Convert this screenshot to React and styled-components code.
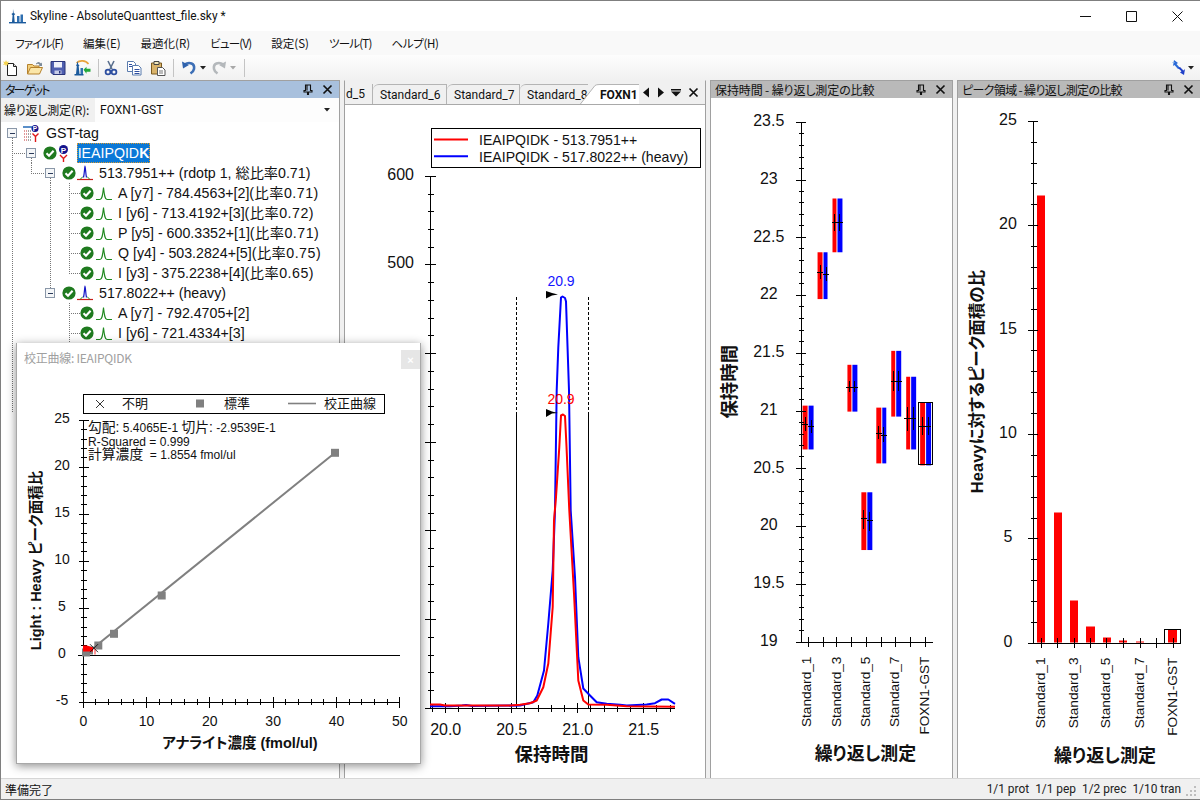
import React from "react";
import styled, { createGlobalStyle } from "styled-components";

const SANS = `"Liberation Sans", "Noto Sans CJK JP", sans-serif`;
const UI = `"Noto Sans CJK JP", "Liberation Sans", sans-serif`;
const TAB = `Roboto, "Liberation Sans", sans-serif`;

const Global = createGlobalStyle`
  html, body { margin: 0; padding: 0; background: #fff; overflow: hidden; }
  * { box-sizing: border-box; }
`;

const Window = styled.div`
  position: relative; width: 1200px; height: 800px; display: flex; flex-direction: column;
  border-top: 1px solid #7f7f7f; border-left: 1px solid #7f7f7f; border-bottom: 1px solid #7f7f7f;
  background: #f0f0f0; font-family: ${SANS}; overflow: hidden; color: #000;
  font-feature-settings: "palt";
`;
const TitleBar = styled.div`
  height: 30px; flex: none; background: #fff; display: flex; align-items: center; padding-left: 8px;
`;
const TitleText = styled.div`
  margin-left: 4px; font: 11.9px ${TAB}; color: #111; flex: 1;
`;
const WinButton = styled.div`
  width: 46px; height: 30px; display: flex; align-items: center; justify-content: center;
`;
const MenuBar = styled.div`
  height: 24px; flex: none; background: #f9f9f9; display: flex; align-items: center; gap: 20px; padding-left: 14px;
`;
const MenuItem = styled.span`
  font: 11.5px/24px ${UI}; font-feature-settings: "palt"; color: #111; white-space: nowrap;
  letter-spacing: ${p => p.$tight || 0}px;
`;
const ToolBar = styled.div`
  height: 25px; flex: none; display: flex; align-items: center; gap: 7.5px; padding: 0 6px 0 2px;
  background: linear-gradient(#fdfdfd, #f1f1f1);
`;
const ToolIcon = styled.svg`
  width: 16px; height: 16px; flex: none; display: block; margin-left: ${p => p.$shift || 0}px;
`;
const Caret = styled.svg`
  width: 6px; height: 4px; flex: none; display: block; margin-left: ${p => p.$shift || 0}px;
`;
const ToolSep = styled.div`
  width: 1px; height: 18px; flex: none; background: #c4c4c4; margin-right: -4px;
`;
const ToolSpacer = styled.div`flex: 1;`;

const Workspace = styled.div`
  flex: 1; min-height: 0; display: flex; gap: 4px; background: #f0f0f0;
`;
const Pane = styled.section`
  width: ${p => p.$w}px; flex: none; display: flex; flex-direction: column; background: #fff;
  border-top: 1px solid ${p => (p.$tabs ? "#f0f0f0" : "#a0a0a0")};
  border-left: ${p => (p.$noLeft ? "0" : "1px solid #a0a0a0")};
  border-right: ${p => (p.$noRight ? "0" : "1px solid #a0a0a0")};
`;
const PaneHeader = styled.header`
  height: 17px; flex: none; display: flex; align-items: center; gap: 9px; padding: 0 6px 0 4px;
  background: ${p => (p.$active ? "#a8c0dd" : "#b9b9b9")};
`;
const PaneTitle = styled.div`
  flex: 1; font: 12px/17px ${UI}; font-feature-settings: "palt"; color: #111; white-space: nowrap; overflow: hidden;
  letter-spacing: ${p => p.$tight || 0}px;
`;
const HeadIcon = styled.svg`
  width: ${p => p.$w || 10}px; height: 11px; flex: none; display: block;
`;

const ReplicateRow = styled.div`
  height: 24px; flex: none; display: flex; align-items: center; background: #f0f0f0; padding-left: 3px;
`;
const ReplicateLabel = styled.label`
  font: 12px/24px ${UI}; font-feature-settings: "palt"; letter-spacing: -0.2px; color: #111; width: 91px; flex: none; white-space: nowrap;
`;
const Combo = styled.div`
  flex: 1; height: 24px; background: #fdfdfd; display: flex; align-items: center; justify-content: space-between;
  padding: 0 9px 0 5px; font: 12px ${TAB}; color: #111;
`;
const Tree = styled.div`
  flex: 1; min-height: 0; padding-top: 1px; background: #fff; overflow: hidden;
`;
const Row = styled.div`
  height: 20px; display: flex; align-items: center; white-space: nowrap;
`;
const Connector = styled.svg`
  height: 20px; width: ${p => p.$w}px; flex: none; display: block;
`;
const CheckIcon = styled.svg`
  width: 14px; height: 14px; flex: none; display: block;
`;
const PeakIcon = styled.svg`
  width: 16px; height: 16px; flex: none; display: block; margin-left: ${p => p.$gap}px; margin-right: 6px;
`;
const PepIcon = styled.svg`
  width: 11px; height: 17px; flex: none; display: block; margin: 0 8px 0 1px;
`;
const ProtIcon = styled.svg`
  width: 17px; height: 17px; flex: none; display: block; margin-right: 6px;
`;
const RowText = styled.span`
  font: 14.2px/20px ${SANS}; color: #111;
`;
const Ratio = styled.span`
  letter-spacing: 0.5px;
`;
const Selected = styled.span`
  font: 14.2px/20px ${SANS}; color: #fff; background: #0a78d7; outline: 1px dotted #d99a30; outline-offset: -1px;
  height: 20px; width: 73px; display: flex; align-items: center; justify-content: center; b { font-weight: 700; }
`;

const TabStrip = styled.div`
  height: 24px; flex: none; display: flex; align-items: stretch; background: #f0f0f0; border-bottom: 1px solid #a9a9a9; padding-top: 3px;
`;
const TabList = styled.div`
  width: 294px; flex: none; display: flex; overflow: hidden; padding-left: 1px;
`;
const Tab = styled.div`
  width: ${p => p.$w}px; flex: none; height: 20px; font: 12px ${TAB}; color: #111; white-space: nowrap;
  border-right: ${p => (p.$open ? "0" : "1px solid #b4b4b4")}; border-top: ${p => (p.$cut ? "0" : "1px solid #b4b4b4")};
  border-top-left-radius: ${p => (p.$cut ? 0 : 6)}px;
  padding-left: ${p => (p.$cut ? 0 : 7)}px; line-height: 21px;
`;
const ActiveTab = styled.div`
  flex: none; display: flex; height: 21px; margin-left: ${p => p.$shift}px; margin-bottom: -1px;
`;
const Slant = styled.svg`
  width: 20px; height: 21px; flex: none; display: block;
`;
const ActiveLabel = styled.div`
  background: #fff; width: 60px; font: 700 12px ${TAB}; color: #111; line-height: 21px; border-top: 1px solid #b4b4b4;
`;
const TabTools = styled.div`
  flex: 1; display: flex; align-items: center; gap: 4px; padding: 0 6px 3px 3px; justify-content: space-between;
`;
const Chart = styled.svg`
  flex: 1; min-height: 0; width: 100%; display: block; background: #fff;
`;
const T = styled.text`
  font-family: ${SANS}; font-size: ${p => p.$s}px; font-weight: ${p => p.$w || 400}; fill: ${p => p.$c || "#111"};
`;
const Cjk = styled.tspan`
  font-size: 13.8px;
`;
const StatusBar = styled.footer`
  height: 21px; flex: none; display: flex; align-items: center; background: #f0f0f0; border-top: 1px solid #d6d6d6;
  padding-left: 4px; font: 12px/19px ${UI}; font-feature-settings: "palt"; color: #111;
`;
const StatusRight = styled.div`
  margin-left: auto; display: flex; gap: 6px; font: 11.9px/20px ${TAB}; color: #222; align-items: center;
`;
const Grip = styled.svg`
  width: 12px; height: 12px; flex: none; margin: 4px 3px 0 -2px; display: block;
`;
const Dialog = styled.div`
  position: absolute; left: 15px; top: 342px; width: 405px; height: 421px; background: #fff;
  border: 1px solid #a8a8a8; border-top: 0; box-shadow: 0 2px 9px rgba(0,0,0,.45);
  display: flex; flex-direction: column;
`;
const DialogBar = styled.div`
  height: 30px; flex: none; display: flex; justify-content: space-between; align-items: flex-start; padding: 0 0 0 7px;
`;
const DialogTitle = styled.div`
  font: 12px/30px ${UI}; font-feature-settings: "palt"; letter-spacing: -0.25px; color: #a0a0a0;
`;
const DialogClose = styled.div`
  width: 19px; height: 19px; margin-top: 7px; background: #e6e6e6; color: #fff; font: 700 11px ${SANS};
  display: flex; align-items: center; justify-content: center;
`;

const Skyline = () => (
  <svg width="17" height="15" viewBox="0 0 17 15" style={{ display: "block", flex: "none" }}>
    <path d="M0 13h17v1.4H0z" fill="#1b5a9c" />
    <path d="M4 0l.7 4 1.6 1-1.2 1.2.6 6.8H3l.6-6.8L2.4 5 3.9 4z" fill="#1b5a9c" />
    <path d="M8 7h2.5v6H8zM11.5 5.5H14V13h-2.5z" fill="#2f6fb0" />
  </svg>
);

const NewIcon = () => (
  <ToolIcon viewBox="0 0 16 16">
    <path d="M4.5 3.5h6l3 3v9h-9z" fill="#fff" stroke="#222" />
    <path d="M10.5 3.5v3h3" fill="#ddd" stroke="#222" />
    <path d="M3 0l.9 2L6 1.4 4.8 3.2 6 5l-2.1-.5L3 6.4 2.2 4.5 0 5l1.3-1.8L0 1.4 2.2 2z" fill="#f4d24c" />
  </ToolIcon>
);
const OpenIcon = () => (
  <ToolIcon viewBox="0 0 16 16">
    <path d="M.5 14V4.5h5l1.5 1.5h5v2" fill="#f2cf7c" stroke="#b5812c" />
    <path d="M.5 14l3-6.5h12L12.5 14z" fill="#fbe6a8" stroke="#b5812c" />
    <path d="M9 3.5c1.5-2 3.5-2 5 0l1-1v3.4h-3.4l1-1c-1-1.3-2.3-1.3-3.6-.4z" fill="#7b8a99" />
  </ToolIcon>
);
const SaveIcon = () => (
  <ToolIcon viewBox="0 0 16 16">
    <path d="M1 1.5h14v13H3l-2-2z" fill="#4f5fb0" stroke="#2a3478" />
    <path d="M4 2h8v5.5H4z" fill="#eef0fa" />
    <path d="M4.5 10.5h7V14h-7z" fill="#c8cde8" />
    <path d="M9 11h1.5v2.5H9z" fill="#2a3478" />
  </ToolIcon>
);
const ImportIcon = () => (
  <ToolIcon viewBox="0 0 16 16" style={{ width: 17 }}>
    <path d="M2 3c3-3 9-3 12 1" fill="none" stroke="#e8a33c" strokeWidth="1.6" />
    <path d="M3 1l.8 3.5L5 5.2l-.8 1L5 14H1.5l.8-7.8-.8-1L2.2 4.5z" fill="#1b5a9c" />
    <path d="M6 8h2.5v6H6z" fill="#2f6fb0" />
    <path d="M0 14h9v1.5H0z" fill="#1b5a9c" />
    <path d="M9 9.8l3-3v2h4v3h-4v2z" fill="#21a83a" />
  </ToolIcon>
);
const CutIcon = () => (
  <ToolIcon viewBox="0 0 16 16">
    <path d="M5 1l4 8M11 1L7 9" stroke="#5a6f8e" strokeWidth="1.6" fill="none" />
    <circle cx="5" cy="12" r="2.4" fill="none" stroke="#2e4fa0" strokeWidth="1.8" />
    <circle cx="11" cy="12" r="2.4" fill="none" stroke="#2e4fa0" strokeWidth="1.8" />
  </ToolIcon>
);
const CopyIcon = () => (
  <ToolIcon viewBox="0 0 16 16">
    <path d="M1.5 1.5h6l2 2v8h-8z" fill="#fff" stroke="#5b7cae" />
    <path d="M6.5 5.5h6l2.5 2.5v7h-8.5z" fill="#fff" stroke="#5b7cae" />
    <path d="M3 4.5h3M3 6.5h3M8.5 9.5h5M8.5 11.5h5M8.5 13.5h5" stroke="#2e4fa0" />
  </ToolIcon>
);
const PasteIcon = () => (
  <ToolIcon viewBox="0 0 16 16">
    <path d="M1.5 3h10v11h-10z" fill="#d9b36a" stroke="#7a5a20" />
    <path d="M4 1.5h5v3H4z" fill="#f2e6b8" stroke="#444" />
    <path d="M7.5 7.5h5l2.5 2.5v5.5H7.5z" fill="#fff" stroke="#555" />
    <path d="M9 11h4M9 13h4" stroke="#777" />
  </ToolIcon>
);
const UndoIcon = ({ gray, shift, flip }) => (
  <ToolIcon viewBox="0 0 16 16" $shift={shift}>
    <g transform={flip ? "translate(16 0) scale(-1 1)" : undefined}>
      <path d="M3.5 4.5c5-3 10.5-1 9.5 4.5-.4 2-2 3.5-3.5 4.5" fill="none" stroke={gray ? "#b4b8bb" : "#3d6fb6"} strokeWidth="2.6" />
      <path d="M1 1.5l1 7 6-3.5z" fill={gray ? "#b4b8bb" : "#2f62ad"} />
    </g>
  </ToolIcon>
);
const CaretIcon = ({ gray, shift }) => (
  <Caret viewBox="0 0 6 4" $shift={shift}><path d="M0 0h6L3 3.5z" fill={gray ? "#a8a8a8" : "#222"} /></Caret>
);
const SyncIcon = () => (
  <ToolIcon viewBox="0 0 16 16" style={{ marginRight: -6 }}>
    <path d="M3 0l4 3-1.5 1L9 8 7 9 3.5 5 2 6z" fill="#2a6ad8" />
    <path d="M13 15l-4-2.5 1.5-1.3L7 8l2-1 3.5 3.5L14 9z" fill="#1f3fc8" />
    <path d="M1 3l1.5-1.5L4 3z" fill="#8fb8e8" />
  </ToolIcon>
);
const Pin = () => (
  <HeadIcon viewBox="0 0 10 11" $w={10}>
    <path d="M2.5 1h5v5.5h1.5V8H1V6.5h1.5zM4 1.5v5M4.5 8v3h1V8z" fill="none" stroke="#111" strokeWidth="1.1" />
  </HeadIcon>
);
const CloseX = () => (
  <HeadIcon viewBox="0 0 11 11" $w={11}>
    <path d="M1.5 1.5l8 8M9.5 1.5l-8 8" stroke="#111" strokeWidth="1.7" fill="none" />
  </HeadIcon>
);

const Check = () => (
  <CheckIcon viewBox="0 0 14 14">
    <circle cx="7" cy="7" r="6.6" fill="#1f7a1f" />
    <path d="M3.5 7.2l2.5 2.5 4.6-5" fill="none" stroke="#fff" strokeWidth="2.1" />
  </CheckIcon>
);
const Peak = ({ precursor, gap }) => (
  <PeakIcon viewBox="0 0 16 16" $gap={gap}>
    {precursor && <path d="M0 14.5h16" stroke="#d01818" strokeWidth="1.2" />}
    {precursor && <path d="M3 14.5l3-3M13 14.5l-3-3" stroke="#1f8a1f" strokeWidth="1" />}
    {precursor ? (
      <path d="M6.5 12.5c1-4 1-10 1.5-11 .6 1 .6 7 1.5 11" fill="none" stroke="#1414c8" strokeWidth="1.2" />
    ) : (
      <path d="M0 14.5h4c2 0 2.5-3 3.5-12 1 9 1.5 12 3.5 12h5" fill="none" stroke="#1f8a1f" strokeWidth="1.1" />
    )}
  </PeakIcon>
);
const PepGlyph = () => (
  <PepIcon viewBox="0 0 11 17">
    <circle cx="5.5" cy="4.5" r="4.5" fill="#14148c" />
    <text x="5.5" y="7.5" textAnchor="middle" fontSize="8" fontWeight="700" fill="#fff" fontFamily="Liberation Sans">P</text>
    <path d="M2 10l3.5 3.5L9 10M5.5 13v4" fill="none" stroke="#e01818" strokeWidth="1.4" />
  </PepIcon>
);
const ProtGlyph = () => (
  <ProtIcon viewBox="0 0 17 17">
    <path d="M0 1h9v2H0z" fill="#5a8fc8" />
    <circle cx="12" cy="3.5" r="3.5" fill="#14148c" />
    <text x="12" y="6" textAnchor="middle" fontSize="6.5" fontWeight="700" fill="#fff" fontFamily="Liberation Sans">P</text>
    <path d="M1 6h3M1 9h3M1 12h3M1 15h3" stroke="#c03030" strokeDasharray="1 1" />
    <path d="M5 6h4M5 9h4M5 12h4M5 15h4" stroke="#444" strokeDasharray="1 1" />
    <path d="M9.5 8.5l3 3 3-3M12.5 11v6" fill="none" stroke="#e01818" strokeWidth="1.4" />
  </ProtIcon>
);

const V = (x, a = 0, b = 20) => `M${x - 0.5} ${a}V${b}`;
const H = (a, b) => `M${a - 1} 10.5H${b}`;
const Box = ({ x }) => (
  <g>
    <rect x={x - 5.5} y="5.5" width="9" height="9" fill="#f4f6f8" stroke="#8a97a8" />
    <path d={`M${x - 3} 10.5h5`} stroke="#2a3a5a" />
  </g>
);
const Lines = ({ w, d, box }) => (
  <Connector $w={w} viewBox={`0 0 ${w} 20`}>
    <path d={d} stroke="#777" strokeDasharray="1 1" fill="none" shapeRendering="crispEdges" />
    {box ? <Box x={box} /> : null}
  </Connector>
);

const transitionsA = [
  ["A [y7] - 784.4563+[2]", "(比率0.71)"],
  ["I [y6] - 713.4192+[3]", "(比率0.72)"],
  ["P [y5] - 600.3352+[1]", "(比率0.71)"],
  ["Q [y4] - 503.2824+[5]", "(比率0.75)"],
  ["I [y3] - 375.2238+[4]", "(比率0.65)"],
];
const transitionsB = [["A [y7] - 792.4705+[2]"], ["I [y6] - 721.4334+[3]"]];

const TransitionRow = ({ text, ratio, d }) => (
  <Row>
    <Lines w={79} d={d} />
    <Check />
    <Peak gap={2} />
    <RowText>{text}{ratio ? <Ratio>{ratio}</Ratio> : null}</RowText>
  </Row>
);

const Targets = () => (
  <Tree>
    <Row>
      <Lines w={22} d={V(12, 15, 20)} box={12} />
      <ProtGlyph />
      <RowText>GST-tag</RowText>
    </Row>
    <Row>
      <Lines w={42} d={V(12) + H(12, 26) + V(31, 15, 20)} box={31} />
      <Check />
      <PepGlyph />
      <Selected>IEAIPQID<b>K</b></Selected>
    </Row>
    <Row>
      <Lines w={61} d={V(12) + V(31, 0, 10) + H(31, 45) + V(50, 15, 20)} box={50} />
      <Check />
      <Peak precursor gap={1} />
      <RowText>513.7951++ (rdotp 1, 総比率0.71)</RowText>
    </Row>
    {transitionsA.map(([t, r], i) => (
      <TransitionRow key={t} text={t} ratio={r} d={V(12) + V(50) + V(69, 0, i === 4 ? 10 : 20) + H(69, 79)} />
    ))}
    <Row>
      <Lines w={61} d={V(12) + V(50, 0, 10)} box={50} />
      <Check />
      <Peak precursor gap={1} />
      <RowText>517.8022++ (heavy)</RowText>
    </Row>
    {transitionsB.map(([t]) => (
      <TransitionRow key={t} text={t} d={V(12) + V(69) + H(69, 79)} />
    ))}
    {[0, 1, 2].map(i => (
      <Row key={i}><Lines w={22} d={V(12)} /></Row>
    ))}
    <Row><Lines w={22} d={V(12, 0, 10)} /></Row>
  </Tree>
);

const range = (a, b, s) => { const o = []; for (let v = a; v <= b + 1e-6; v += s) o.push(+v.toFixed(4)); return o; };
const px = v => Math.floor(v) + 0.5;

const YTicks = ({ x, vals, y, isMajor, maj, min }) => (
  <path
    stroke="#000" fill="none" shapeRendering="crispEdges"
    d={vals.map(v => { const r = isMajor(v) ? maj : min; return `M${x - r[0]} ${px(y(v))}H${x + r[1]}`; }).join("")}
  />
);
const XTicks = ({ y, xs, maj, min }) => (
  <path
    stroke="#000" fill="none" shapeRendering="crispEdges"
    d={xs.map(t => { const r = t.major ? maj : min; return `M${px(t.x)} ${y - r}V${y + r + 1}`; }).join("")}
  />
);
const Axis = ({ d }) => <path d={d} stroke="#000" fill="none" shapeRendering="crispEdges" />;

const blue = [[430,705.7],[450,705.7],[462,705],[466,704.5],[472,705.5],[520,705],[533.3,701.7],[537.3,695],[544,670],[548.3,623],[552.7,570],[555,510],[556.7,390],[558.3,346.7],[561,297],[562.5,296],[565,297.5],[566,301],[569,390],[570.7,510],[575,576.7],[578.3,656.7],[583.3,688],[590,695],[596.7,701.7],[606.7,703.3],[620,704.3],[626.7,705],[646.7,704],[655,702.7],[661.7,699],[668.3,699],[675,703.3]];
const red = [[430,704],[440,704],[445,705],[510,705],[520,704.3],[530,702.7],[536.7,700],[543.3,686.7],[548.3,663],[552.7,606.7],[554,520],[556,496.7],[559.3,446.7],[561,415],[563,414],[565,415.5],[566.5,446],[569.3,510],[574,593],[578.3,680],[583.3,700],[588.3,704],[606.7,704.3],[626.7,705.7],[675,706.3]];
const pts = a => a.map(p => p.join(",")).join(" ");

const ChromChart = () => {
  const y = v => 707.3 - v * 0.8867;
  const x = v => 445.7 + (v - 20) * 132;
  const xt = range(19.9, 21.7, 0.1).map(v => ({ x: x(v), major: Math.abs(v * 2 - Math.round(v * 2)) < 1e-6 }));
  return (
    <Chart viewBox="345 105 360 672">
      {[500, 600].map(v => (
        <T key={v} x="414" y={y(v) + 4} $s={16} textAnchor="end">{v}</T>
      ))}
      <Axis d="M430.5 175V707" />
      <YTicks x={430.5} vals={range(0, 600, 20)} y={y} isMajor={v => v % 100 === 0} maj={[5.5, 5.5]} min={[3, 3]} />
      <Axis d="M425 707.5H675" />
      <XTicks y={707} xs={xt} maj={4.5} min={3} />
      {[20, 20.5, 21, 21.5].map(v => (
        <T key={v} x={x(v)} y={734} $s={16} textAnchor="middle">{v.toFixed(1)}</T>
      ))}
      <T x="551.5" y="760.5" $s={18.5} $w={700} textAnchor="middle">保持時間</T>
      <path d="M516.5 296V412M588.5 296V412" stroke="#000" strokeDasharray="3 2" shapeRendering="crispEdges" />
      <path d="M516.5 412V707M588.5 412V707" stroke="#000" shapeRendering="crispEdges" />
      <polyline points={pts(blue)} fill="none" stroke="#0000ff" strokeWidth="2" strokeLinejoin="round" />
      <polyline points={pts(red)} fill="none" stroke="#ff0000" strokeWidth="2" strokeLinejoin="round" />
      <T x="561" y="285" $s={14} $c="#1414ff" textAnchor="middle">20.9</T>
      <T x="561" y="403" $s={14} $c="#ff0000" textAnchor="middle">20.9</T>
      <path d="M546 290.5L552 292.5L558 294L552 295L546 298zM546 408.5L552 411L558 412.5L552 413L546 416.5z" fill="#000" />
      <rect x="431" y="127.5" width="269" height="39" fill="#fff" stroke="#000" shapeRendering="crispEdges" />
      <path d="M434 139h34" stroke="#ff0000" strokeWidth="2" />
      <path d="M434 155.7h34" stroke="#0000ff" strokeWidth="2" />
      <T x="479" y="144" $s={14.1}>IEAIPQIDK - 513.7951++</T>
      <T x="479" y="161" $s={14.1}>IEAIPQIDK - 517.8022++ (heavy)</T>
    </Chart>
  );
};

const replicateLabels = ["Standard_1", "Standard_3", "Standard_5", "Standard_7", "FOXN1-GST"];

const rtGroups = [
  { r: [803, 808], b: [809, 814], t: 405, e: 449, c: [[805.3, 423.3, 416.7, 430], [811.3, 425.7, 419, 432.3]] },
  { r: [818, 823], b: [824, 828], t: 251, e: 298, c: [[820.7, 271.3, 264, 278], [826, 273.3, 265.7, 280]] },
  { r: [833, 837], b: [838, 843], t: 197, e: 251, c: [[835.3, 221.3, 213, 230], [840.3, 221.3, 213, 230]] },
  { r: [848, 852], b: [853, 858], t: 364, e: 411, c: [[850, 386, 380.7, 391.7], [855.3, 386, 380, 391]] },
  { r: [862, 867], b: [868, 873], t: 492, e: 550, c: [[864.7, 518.3, 509.3, 529], [870.3, 520.7, 511.7, 531.3]] },
  { r: [877, 882], b: [883, 887], t: 407, e: 463, c: [[879.3, 432.3, 425, 439], [884.7, 434.3, 426, 441.7]] },
  { r: [892, 896], b: [897, 902], t: 350, e: 416, c: [[894.7, 380, 370.7, 390], [899.7, 380, 370.7, 390]] },
  { r: [907, 911], b: [912, 917], t: 376, e: 449, c: [[908.3, 417.7, 406, 430], [914.3, 417.7, 406, 429.3]] },
  { r: [921, 926], b: [927, 932], t: 402, e: 465, c: [[923.3, 425, 416, 434], [929.3, 425, 416, 434]] },
];

const RtChart = () => {
  const y = v => 642.3 - (v - 19) * 116;
  const tickX = [808.3, 823.3, 837.7, 852.7, 867, 882, 896.7, 911.7, 926.3];
  return (
    <Chart viewBox="711 98 242 679">
      {[19, 19.5, 20, 20.5, 21, 21.5, 22, 22.5, 23, 23.5].map(v => (
        <T key={v} x="769" y={y(v) + 4} $s={16} textAnchor="middle">{v}</T>
      ))}
      {rtGroups.map((g, i) => (
        <g key={i}>
          <rect x={g.r[0]} y={g.t} width={g.r[1] - g.r[0]} height={g.e - g.t} fill="#ff0000" />
          <rect x={g.b[0]} y={g.t} width={g.b[1] - g.b[0]} height={g.e - g.t} fill="#0000ff" />
          <path
            stroke="#000" shapeRendering="crispEdges"
            d={g.c.map(([cx, cy, a, b]) => `M${px(cx)} ${a}V${b}M${cx - 3} ${px(cy)}H${cx + 3}`).join("")}
          />
        </g>
      ))}
      <rect x="919.5" y="401.5" width="14" height="63" fill="none" stroke="#000" shapeRendering="crispEdges" />
      <Axis d="M801.5 120V642" />
      <YTicks x={801.5} vals={range(19, 23.5, 0.1)} y={y} isMajor={v => Math.abs(v * 2 - Math.round(v * 2)) < 1e-6} maj={[5.5, 5]} min={[2.5, 2.5]} />
      <Axis d="M796 642.5H934" />
      <XTicks y={642} xs={tickX.map(x => ({ x, major: true }))} maj={4.5} />
      {replicateLabels.map((l, i) => {
        const x = tickX[i * 2] + 3.5;
        return <T key={l} transform={`rotate(-90 ${x} 657)`} x={x} y="657" $s={13.7} textAnchor="end">{l}</T>;
      })}
      <T x="866" y="761" $s={18} $w={700} textAnchor="middle">繰り返し測定</T>
      <T transform="rotate(-90 736 381)" x="736" y="381" $s={18.5} $w={700} textAnchor="middle">保持時間</T>
    </Chart>
  );
};

const areaBars = [[1037, 1045, 195], [1054, 1062, 512], [1070, 1078, 600], [1086, 1095, 626], [1103, 1111, 637], [1119, 1127, 640], [1136, 1144, 641], [1168, 1177, 629]];

const AreaChart = () => {
  const y = v => 642.3 - v * 20.88;
  const tickX = [1041, 1057.3, 1074, 1090.3, 1106.7, 1123.3, 1140, 1156.7, 1173];
  return (
    <Chart viewBox="958 98 242 679">
      {[0, 5, 10, 15, 20, 25].map(v => (
        <T key={v} x="1008" y={y(v) + 4} $s={16} textAnchor="middle">{v}</T>
      ))}
      {areaBars.map(([a, b, t]) => <rect key={a} x={a} y={t} width={b - a} height={642 - t} fill="#ff0000" />)}
      <rect x="1164.5" y="628.5" width="16" height="14" fill="none" stroke="#000" shapeRendering="crispEdges" />
      <Axis d="M1033.5 120V642" />
      <YTicks x={1033.5} vals={range(0, 25, 1)} y={y} isMajor={v => v % 5 === 0} maj={[5.5, 4.5]} min={[3, 3]} />
      <Axis d="M1028 642.5H1181" />
      <XTicks y={642} xs={tickX.map(x => ({ x, major: true }))} maj={4.5} />
      {replicateLabels.map((l, i) => {
        const x = tickX[i * 2] + 3.5;
        return <T key={l} transform={`rotate(-90 ${x} 657)`} x={x} y="657" $s={13.7} textAnchor="end">{l}</T>;
      })}
      <T x="1105" y="761" $s={18} $w={700} textAnchor="middle">繰り返し測定</T>
      <T transform="rotate(-90 983 381)" x="983" y="381" $s={16.5} $w={700} textAnchor="middle">Heavyに対するピーク面積の比</T>
    </Chart>
  );
};

const CalChart = () => {
  const y = v => 654.3 - v * 9.4;
  const x = v => 83.3 + v * 6.328;
  const squares = [[335, 452.3], [161.7, 595], [114, 633.3], [98.3, 645], [89, 650], [86, 652]];
  return (
    <Chart viewBox="17 373 403 389">
      <rect x="83.5" y="393.5" width="301" height="19" fill="none" stroke="#000" shapeRendering="crispEdges" />
      <path d="M96 399.5l8 8M104 399.5l-8 8" stroke="#000" strokeWidth="0.8" />
      <T x="122" y="407.5" $s={13}>不明</T>
      <rect x="196" y="399" width="8" height="8" fill="#808080" />
      <T x="224" y="407.5" $s={13}>標準</T>
      <path d="M288 403h28" stroke="#808080" strokeWidth="1.6" />
      <T x="324" y="407.5" $s={13}>校正曲線</T>
      {[-5, 0, 5, 10, 15, 20, 25].map(v => (
        <T key={v} x="62" y={y(v) + 3.5} $s={14} textAnchor="middle">{v}</T>
      ))}
      <Axis d="M83.5 419V702" />
      <YTicks x={83.5} vals={range(-5, 25, 1)} y={y} isMajor={v => ((v % 5) + 5) % 5 === 0} maj={[5, 5]} min={[2.5, 3]} />
      <Axis d="M83 701.5H400" />
      <XTicks y={701} xs={range(0, 50, 2).map(v => ({ x: x(v), major: v % 10 === 0 }))} maj={5} min={2.5} />
      {[0, 10, 20, 30, 40, 50].map(v => (
        <T key={v} x={x(v)} y={725} $s={14} textAnchor="middle">{v}</T>
      ))}
      <Axis d="M78 654.5H400" />
      <path d="M84 655L335 452.3" stroke="#808080" strokeWidth="2" />
      {squares.map(([a, b]) => <rect key={a} x={a - 4} y={b - 4} width="8" height="8" fill="#808080" />)}
      <path d="M83 645h4l6 2v4H83z" fill="#ff0000" />
      <path d="M95 648v6" stroke="#ff9a9a" strokeWidth="2" />
      <path d="M90 643.7l8 8M98 643.7l-8 8" stroke="#000" strokeWidth="0.8" />
      <T x="88" y="431" $s={12}><Cjk>勾配:</Cjk> 5.4065E-1 <Cjk>切片:</Cjk> -2.9539E-1</T>
      <T x="88" y="445" $s={12}>R-Squared = 0.999</T>
      <T x="88" y="458" $s={12}><Cjk>計算濃度</Cjk>{"\u00a0\u00a0"}= 1.8554 fmol/ul</T>
      <T x="240" y="747.5" $s={14.5} $w={700} textAnchor="middle">アナライト濃度 (fmol/ul)</T>
      <T transform="rotate(-90 41 560)" x="41" y="560" $s={14.5} $w={700} textAnchor="middle">Light : Heavy ピーク面積比</T>
    </Chart>
  );
};

const menus = [
  ["ファイル(F)", -0.85],
  ["編集(E)", 0],
  ["最適化(R)", 0],
  ["ビュー(V)", -0.8],
  ["設定(S)", 0],
  ["ツール(T)", -0.8],
  ["ヘルプ(H)", -0.35],
];

export default function App() {
  return (
    <Window>
      <Global />
      <TitleBar>
        <Skyline />
        <TitleText>Skyline - AbsoluteQuanttest_file.sky *</TitleText>
        <WinButton><svg width="11" height="11" viewBox="0 0 11 11"><path d="M0 5.5h11" stroke="#111" /></svg></WinButton>
        <WinButton><svg width="11" height="11" viewBox="0 0 11 11"><path d="M.5.5h10v10H.5z" fill="none" stroke="#111" /></svg></WinButton>
        <WinButton><svg width="11" height="11" viewBox="0 0 11 11"><path d="M.5.5l10 10M10.5.5l-10 10" stroke="#111" /></svg></WinButton>
      </TitleBar>
      <MenuBar>{menus.map(([m, t]) => <MenuItem key={m} $tight={t}>{m}</MenuItem>)}</MenuBar>
      <ToolBar>
        <NewIcon /><OpenIcon /><SaveIcon /><ImportIcon />
        <ToolSep />
        <CutIcon /><CopyIcon /><PasteIcon />
        <ToolSep />
        <UndoIcon shift={3} /><CaretIcon shift={-4} />
        <UndoIcon gray flip shift={-3} /><CaretIcon gray shift={-4} />
        <ToolSep />
        <ToolSpacer />
        <SyncIcon /><CaretIcon />
      </ToolBar>
      <Workspace>
        <Pane $w={339} $noLeft>
          <PaneHeader $active>
            <PaneTitle $tight={-1.8}>ターゲット</PaneTitle>
            <Pin /><CloseX />
          </PaneHeader>
          <ReplicateRow>
            <ReplicateLabel>繰り返し測定(R):</ReplicateLabel>
            <Combo>FOXN1-GST<CaretIcon /></Combo>
          </ReplicateRow>
          <Targets />
        </Pane>
        <Pane $w={362} $tabs>
          <TabStrip>
            <TabList>
              <Tab $w={27} $cut>d_5</Tab>
              <Tab $w={74}>Standard_6</Tab>
              <Tab $w={73}>Standard_7</Tab>
              <Tab $w={68} $open>Standard_8</Tab>
              <ActiveTab $shift={-8}>
                <Slant viewBox="0 0 20 21">
                  <path d="M0 21L15 1.5Q16 .5 20 .5V21z" fill="#fff" />
                  <path d="M0 20.5L15 1.5Q16 .5 20 .5" fill="none" stroke="#b4b4b4" />
                </Slant>
                <ActiveLabel>FOXN1</ActiveLabel>
              </ActiveTab>
            </TabList>
            <TabTools>
              <HeadIcon viewBox="0 0 8 11" $w={8}><path d="M7 .5v10L1 5.5z" fill="#111" /></HeadIcon>
              <HeadIcon viewBox="0 0 8 11" $w={8}><path d="M1 .5v10l6-5z" fill="#111" /></HeadIcon>
              <HeadIcon viewBox="0 0 10 11" $w={10}><path d="M0 2h10v1.5H0zM0 4.5h10L5 9.5z" fill="#111" /></HeadIcon>
              <CloseX />
            </TabTools>
          </TabStrip>
          <ChromChart />
        </Pane>
        <Pane $w={243}>
          <PaneHeader>
            <PaneTitle $tight={-0.12}>保持時間 - 繰り返し測定の比較</PaneTitle>
            <Pin /><CloseX />
          </PaneHeader>
          <RtChart />
        </Pane>
        <Pane $w={243} $noRight>
          <PaneHeader>
            <PaneTitle $tight={-0.65}>ピーク領域 - 繰り返し測定の比較</PaneTitle>
            <Pin /><CloseX />
          </PaneHeader>
          <AreaChart />
        </Pane>
      </Workspace>
      <StatusBar>
        準備完了
        <StatusRight>
          <span>1/1 prot</span><span>1/1 pep</span><span>1/2 prec</span><span>1/10 tran</span>
          <Grip viewBox="0 0 12 12">
            <path d="M9 1h2v2H9zM5 5h2v2H5zM9 5h2v2H9zM1 9h2v2H1zM5 9h2v2H5zM9 9h2v2H9z" fill="#bdbdbd" />
          </Grip>
        </StatusRight>
      </StatusBar>
      <Dialog>
        <DialogBar>
          <DialogTitle>校正曲線: IEAIPQIDK</DialogTitle>
          <DialogClose>×</DialogClose>
        </DialogBar>
        <CalChart />
      </Dialog>
    </Window>
  );
}
